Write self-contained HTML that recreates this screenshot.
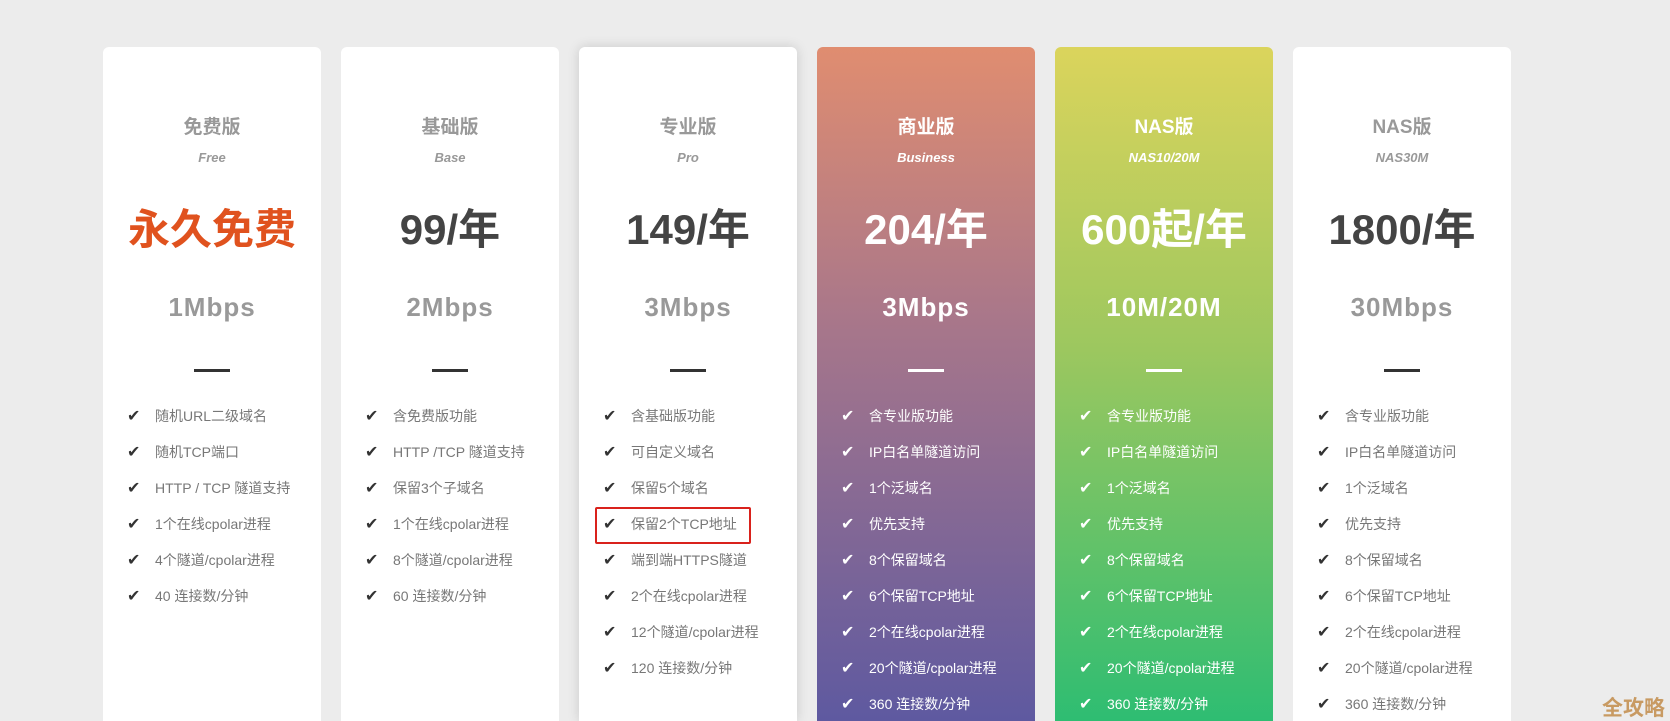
<!DOCTYPE html>
<html style="overflow:hidden;height:721px"><head><meta charset="utf-8"><style>
*{margin:0;padding:0;box-sizing:border-box}
body{width:1670px;height:721px;background:#ececec;overflow:hidden;position:relative;font-family:"Liberation Sans","Noto Sans CJK SC",sans-serif}
.card{position:absolute;top:47px;width:218px;height:674px;background:#fff;border-radius:6px 6px 0 0;text-align:center;color:#999;overflow:hidden}
.t{position:absolute;top:69px;left:0;right:0;font-size:19px;font-weight:bold;line-height:24px}
.s{position:absolute;top:102px;left:0;right:0;font-size:13px;font-style:italic;font-weight:bold;line-height:18px}
.p{position:absolute;top:156px;left:0;right:0;font-size:42px;font-weight:bold;color:#444;line-height:54px}
.m{position:absolute;top:244px;left:0;right:0;font-size:26px;font-weight:bold;line-height:32px;letter-spacing:1px}
.d{position:absolute;top:322px;left:91px;width:36px;height:3px;background:#333}
ul{position:absolute;top:357px;left:24px;list-style:none;text-align:left}
li{height:36px;line-height:24px;font-size:14px;color:#777;white-space:nowrap}
li:before{content:"✔";display:inline-block;width:28px;color:#333;font-size:16px}
.c .t,.c .s,.c .p,.c .m,.c li,.c li:before{color:#fff}
.c .d{background:#fff}
</style></head><body>
<div class="card" style="left:103px;top:47px"><div class="t">免费版</div><div class="s">Free</div><div class="p" style="color:#e0521e">永久免费</div><div class="m">1Mbps</div><div class="d"></div><ul><li>随机URL二级域名</li><li>随机TCP端口</li><li>HTTP / TCP 隧道支持</li><li>1个在线cpolar进程</li><li>4个隧道/cpolar进程</li><li>40 连接数/分钟</li></ul></div>
<div class="card" style="left:341px"><div class="t">基础版</div><div class="s">Base</div><div class="p">99/年</div><div class="m">2Mbps</div><div class="d"></div><ul><li>含免费版功能</li><li>HTTP /TCP 隧道支持</li><li>保留3个子域名</li><li>1个在线cpolar进程</li><li>8个隧道/cpolar进程</li><li>60 连接数/分钟</li></ul></div>
<div class="card" style="left:579px;box-shadow:0 0 12px rgba(0,0,0,.15)"><div class="t">专业版</div><div class="s">Pro</div><div class="p">149/年</div><div class="m">3Mbps</div><div class="d"></div><ul><li>含基础版功能</li><li>可自定义域名</li><li>保留5个域名</li><li>保留2个TCP地址</li><li>端到端HTTPS隧道</li><li>2个在线cpolar进程</li><li>12个隧道/cpolar进程</li><li>120 连接数/分钟</li></ul>
<div style="position:absolute;left:16px;top:460px;width:156px;height:37px;border:2px solid #d9221c;border-radius:2px"></div></div>
<div class="card c" style="left:817px;background:linear-gradient(#e08d70,#a9778a 40%,#5e59a0 100%)"><div class="t">商业版</div><div class="s">Business</div><div class="p">204/年</div><div class="m">3Mbps</div><div class="d"></div><ul><li>含专业版功能</li><li>IP白名单隧道访问</li><li>1个泛域名</li><li>优先支持</li><li>8个保留域名</li><li>6个保留TCP地址</li><li>2个在线cpolar进程</li><li>20个隧道/cpolar进程</li><li>360 连接数/分钟</li></ul></div>
<div class="card c" style="left:1055px;background:linear-gradient(#dbd45c,#9cc75f 45%,#2ebd72 100%)"><div class="t">NAS版</div><div class="s">NAS10/20M</div><div class="p">600起/年</div><div class="m">10M/20M</div><div class="d"></div><ul><li>含专业版功能</li><li>IP白名单隧道访问</li><li>1个泛域名</li><li>优先支持</li><li>8个保留域名</li><li>6个保留TCP地址</li><li>2个在线cpolar进程</li><li>20个隧道/cpolar进程</li><li>360 连接数/分钟</li></ul></div>
<div class="card" style="left:1293px"><div class="t">NAS版</div><div class="s">NAS30M</div><div class="p">1800/年</div><div class="m">30Mbps</div><div class="d"></div><ul><li>含专业版功能</li><li>IP白名单隧道访问</li><li>1个泛域名</li><li>优先支持</li><li>8个保留域名</li><li>6个保留TCP地址</li><li>2个在线cpolar进程</li><li>20个隧道/cpolar进程</li><li>360 连接数/分钟</li></ul></div>
<div style="position:absolute;left:1602px;top:692px;font-size:21px;font-weight:bold;color:#c89a62">全攻略</div>
</body></html>
